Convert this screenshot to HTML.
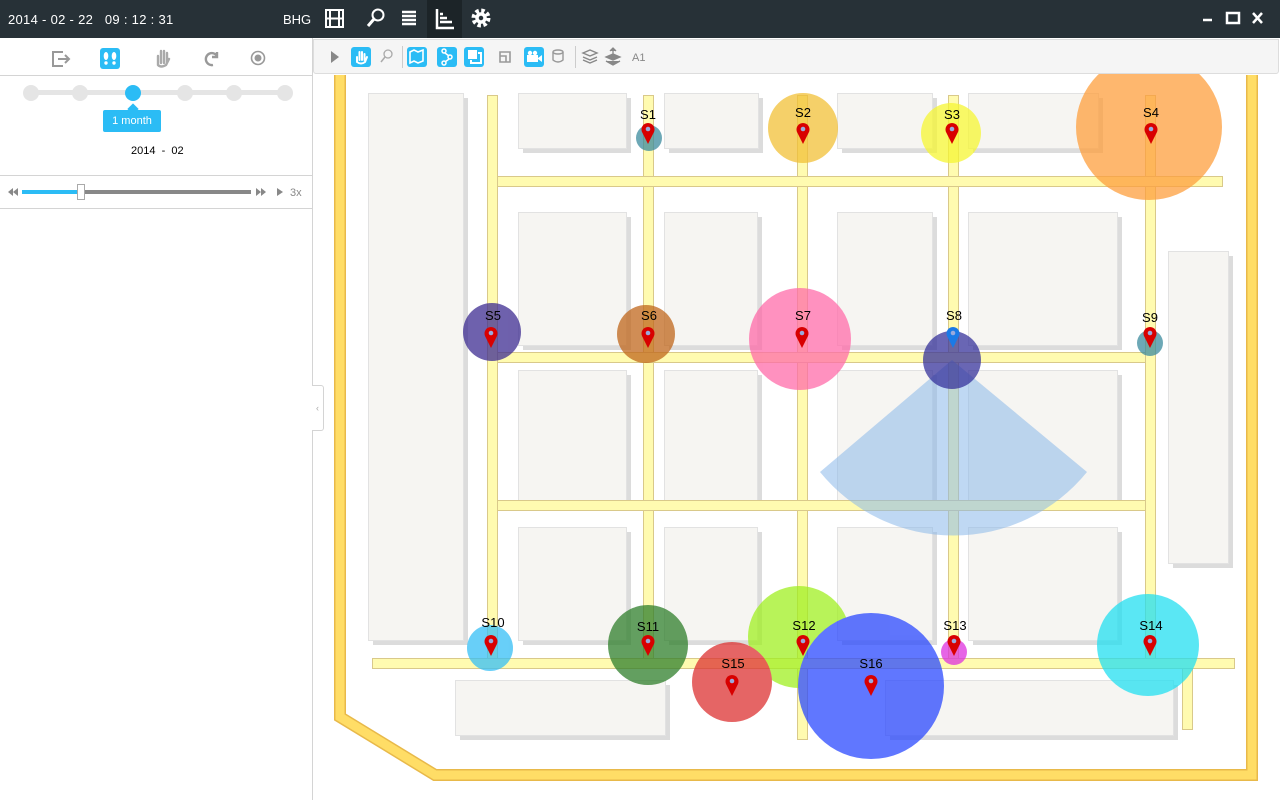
<!DOCTYPE html>
<html><head><meta charset="utf-8"><style>
*{margin:0;padding:0;box-sizing:border-box}
body{width:1280px;height:800px;overflow:hidden;background:#fff;font-family:"Liberation Sans",sans-serif;position:relative}
.top{position:absolute;left:0;top:0;width:1280px;height:38px;background:#273137;color:#fff}
.side{position:absolute;left:0;top:38px;width:313px;height:762px;background:#fff;border-right:1px solid #d4d4d4}
.tb{position:absolute;left:313px;top:39px;width:966px;height:35px;background:#f5f5f5;border:1px solid #ddd;border-radius:0 0 3px 3px}
</style></head><body>
<svg width="1280" height="800" style="position:absolute;left:0;top:0">
<path d="M340 75 V717 L435 775 H1252 V75" fill="none" stroke="#e8b94a" stroke-width="12"/>
<path d="M340 75 V717 L435 775 H1252 V75" fill="none" stroke="#ffdd66" stroke-width="9"/>
<g fill="#dcdcdc">
<rect x="373" y="98" width="95" height="547"/>
<rect x="523" y="98" width="108" height="55"/><rect x="669" y="98" width="94" height="55"/><rect x="842" y="98" width="95" height="55"/><rect x="973" y="98" width="130" height="55"/>
<rect x="523" y="217" width="108" height="133"/><rect x="669" y="217" width="93" height="133"/><rect x="842" y="217" width="95" height="133"/><rect x="973" y="217" width="149" height="133"/>
<rect x="523" y="375" width="108" height="130"/><rect x="669" y="375" width="93" height="130"/><rect x="842" y="375" width="95" height="130"/><rect x="973" y="375" width="149" height="130"/>
<rect x="523" y="532" width="108" height="113"/><rect x="669" y="532" width="93" height="113"/><rect x="842" y="532" width="95" height="113"/><rect x="973" y="532" width="149" height="113"/>
<rect x="1173" y="256" width="60" height="312"/>
<rect x="460" y="685" width="210" height="55"/><rect x="890" y="685" width="288" height="55"/>
</g>
<g fill="#f6f5f2" stroke="#e2e2e2">
<rect x="368.5" y="93.5" width="95" height="547"/>
<rect x="518.5" y="93.5" width="108" height="55"/><rect x="664.5" y="93.5" width="94" height="55"/><rect x="837.5" y="93.5" width="95" height="55"/><rect x="968.5" y="93.5" width="130" height="55"/>
<rect x="518.5" y="212.5" width="108" height="133"/><rect x="664.5" y="212.5" width="93" height="133"/><rect x="837.5" y="212.5" width="95" height="133"/><rect x="968.5" y="212.5" width="149" height="133"/>
<rect x="518.5" y="370.5" width="108" height="130"/><rect x="664.5" y="370.5" width="93" height="130"/><rect x="837.5" y="370.5" width="95" height="130"/><rect x="968.5" y="370.5" width="149" height="130"/>
<rect x="518.5" y="527.5" width="108" height="113"/><rect x="664.5" y="527.5" width="93" height="113"/><rect x="837.5" y="527.5" width="95" height="113"/><rect x="968.5" y="527.5" width="149" height="113"/>
<rect x="1168.5" y="251.5" width="60" height="312"/>
<rect x="455.5" y="680.5" width="210" height="55"/><rect x="885.5" y="680.5" width="288" height="55"/>
</g>
<g fill="#fffbb0" stroke="#d9c98a">
<rect x="487.5" y="95.5" width="10" height="565"/>
<rect x="643.5" y="95.5" width="10" height="565"/>
<rect x="797.5" y="95.5" width="10" height="644"/>
<rect x="948.5" y="95.5" width="10" height="565"/>
<rect x="1145.5" y="95.5" width="10" height="565"/>
<rect x="1182.5" y="668.5" width="10" height="61"/>
<rect x="497.5" y="176.5" width="725" height="10"/>
<rect x="497.5" y="352.5" width="648" height="10"/>
<rect x="497.5" y="500.5" width="648" height="10"/>
<rect x="372.5" y="658.5" width="862" height="10"/>
</g>
<g fill="#fffbb0">
<rect x="488" y="177" width="9" height="9"/><rect x="644" y="177" width="9" height="9"/><rect x="798" y="177" width="9" height="9"/><rect x="949" y="177" width="9" height="9"/><rect x="1146" y="177" width="9" height="9"/>
<rect x="488" y="353" width="9" height="9"/><rect x="644" y="353" width="9" height="9"/><rect x="798" y="353" width="9" height="9"/><rect x="949" y="353" width="9" height="9"/><rect x="1146" y="353" width="9" height="9"/>
<rect x="488" y="501" width="9" height="9"/><rect x="644" y="501" width="9" height="9"/><rect x="798" y="501" width="9" height="9"/><rect x="949" y="501" width="9" height="9"/><rect x="1146" y="501" width="9" height="9"/>
<rect x="488" y="659" width="9" height="9"/><rect x="644" y="659" width="9" height="9"/><rect x="798" y="659" width="9" height="9"/><rect x="949" y="659" width="9" height="9"/><rect x="1146" y="659" width="9" height="9"/>
</g>
<path d="M952 360 L820 472 A172 172 0 0 0 1087 472 Z" fill="#8ab8ea" opacity="0.55"/>
<g opacity="0.74">
<circle cx="649" cy="138" r="13" fill="#3a8a9c"/>
<circle cx="803" cy="128" r="35" fill="#f2c034"/>
<circle cx="951" cy="133" r="30" fill="#f5f530"/>
<circle cx="1149" cy="127" r="73" fill="#fd9e3c"/>
<circle cx="492" cy="332" r="29" fill="#3c2a90"/>
<circle cx="646" cy="334" r="29" fill="#c0661a"/>
<circle cx="800" cy="339" r="51" fill="#ff6aa8"/>
<circle cx="952" cy="360" r="29" fill="#34309a"/>
<circle cx="1150" cy="343" r="13" fill="#3a8a9c"/>
<circle cx="490" cy="648" r="23" fill="#33bef5"/>
<circle cx="648" cy="645" r="40" fill="#2e7e2a"/>
<circle cx="799" cy="637" r="51" fill="#a0f020"/>
<circle cx="954" cy="652" r="13" fill="#de30de"/>
<circle cx="732" cy="682" r="40" fill="#dc3030"/>
<circle cx="871" cy="686" r="73" fill="#2a48ff"/>
<circle cx="1148" cy="645" r="51" fill="#20def0"/>
</g>
<defs><g id="pin"><path d="M0 14 L-6 2 A6.5 6.5 0 1 1 6 2 Z"/><circle cx="0" cy="-1" r="2.3" fill="#9ad"/></g></defs>
<g fill="#d80000">
<use href="#pin" x="648" y="130"/><use href="#pin" x="803" y="130"/><use href="#pin" x="952" y="130"/><use href="#pin" x="1151" y="130"/>
<use href="#pin" x="491" y="334"/><use href="#pin" x="648" y="334"/><use href="#pin" x="802" y="334"/><use href="#pin" x="1150" y="334"/>
<use href="#pin" x="491" y="642"/><use href="#pin" x="648" y="642"/><use href="#pin" x="803" y="642"/><use href="#pin" x="954" y="642"/><use href="#pin" x="1150" y="642"/>
<use href="#pin" x="732" y="682"/><use href="#pin" x="871" y="682"/>
</g>
<use href="#pin" x="953" y="334" fill="#1a7ae6"/>
<g font-family="Liberation Sans, sans-serif" font-size="13" fill="#000" text-anchor="middle">
<text x="648" y="119">S1</text><text x="803" y="117">S2</text><text x="952" y="119">S3</text><text x="1151" y="117">S4</text>
<text x="493" y="320">S5</text><text x="649" y="320">S6</text><text x="803" y="320">S7</text><text x="954" y="320">S8</text><text x="1150" y="322">S9</text>
<text x="493" y="627">S10</text><text x="648" y="631">S11</text><text x="804" y="630">S12</text><text x="955" y="630">S13</text><text x="1151" y="630">S14</text>
<text x="733" y="668">S15</text><text x="871" y="668">S16</text>
</g>
</svg>

<div class="top">
<div style="position:absolute;left:8px;top:12px;font-size:13px;letter-spacing:.3px">2014 - 02 - 22&nbsp;&nbsp; 09 : 12 : 31</div>
<div style="position:absolute;left:283px;top:12px;font-size:13px">BHG</div>
<svg width="1280" height="38" style="position:absolute;left:0;top:0" fill="none" stroke="#fff" stroke-width="2">
<rect x="326" y="10" width="17" height="17"/><line x1="330" y1="10" x2="330" y2="27"/><line x1="339" y1="10" x2="339" y2="27"/><line x1="326" y1="18.5" x2="343" y2="18.5"/>
<circle cx="378" cy="15" r="5.5"/><line x1="374" y1="19" x2="368" y2="26" stroke-width="3"/>
<path d="M402 12h14M402 16h14M402 20h14M402 24h14" stroke-width="2.5"/>
<rect x="427" y="0" width="35" height="38" fill="#1c2428" stroke="none"/>
<path d="M437 9v19h17M440 14h3M440 18h7M440 22h12" stroke-width="2.5"/>
<circle cx="481" cy="18" r="7" stroke-width="5" stroke-dasharray="3.2 2.3"/><circle cx="481" cy="18" r="4" stroke-width="3.5"/>
<line x1="1203" y1="20" x2="1212" y2="20" stroke-width="2.5"/>
<rect x="1227" y="13" width="12" height="10" stroke-width="2.5"/>
<path d="M1253 13l9 10M1262 13l-9 10" stroke-width="2.5"/>
</svg>
</div>

<div class="side">
<svg width="313" height="40" style="position:absolute;left:0;top:0">
<path d="M63 14h-10v14h10M58 21h10M65 17l4 4-4 4" fill="none" stroke="#999" stroke-width="2"/>
<rect x="100" y="10" width="20" height="21" rx="3" fill="#2bbcf5"/>
<g fill="#fff"><ellipse cx="106" cy="18" rx="2.3" ry="4"/><ellipse cx="114" cy="18" rx="2.3" ry="4"/><circle cx="106" cy="25" r="1.7"/><circle cx="114" cy="25" r="1.7"/></g>
<path d="M158 27v-9M161 25v-12M164 25v-12M167 25v-10M158 27q3 3 8 0l3-6" stroke="#aaa" stroke-width="2.4" fill="none" stroke-linecap="round"/>
<path d="M213 27a6 6 0 1 1 4-9M217 14v5h-5" stroke="#999" stroke-width="2.4" fill="none"/>
<circle cx="258" cy="20" r="6.5" fill="none" stroke="#999" stroke-width="1.6"/><circle cx="258" cy="20" r="3.5" fill="#999"/>
</svg>
<div style="position:absolute;left:0;top:37px;width:312px;height:1px;background:#d4d4d4"></div>
<div style="position:absolute;left:30px;top:52px;width:256px;height:5px;background:#e5e5e5"></div>
<div style="position:absolute;left:23px;top:47px;width:16px;height:16px;border-radius:50%;background:#e5e5e5"></div>
<div style="position:absolute;left:72px;top:47px;width:16px;height:16px;border-radius:50%;background:#e5e5e5"></div>
<div style="position:absolute;left:125px;top:47px;width:16px;height:16px;border-radius:50%;background:#2bbcf5"></div>
<div style="position:absolute;left:177px;top:47px;width:16px;height:16px;border-radius:50%;background:#e5e5e5"></div>
<div style="position:absolute;left:226px;top:47px;width:16px;height:16px;border-radius:50%;background:#e5e5e5"></div>
<div style="position:absolute;left:277px;top:47px;width:16px;height:16px;border-radius:50%;background:#e5e5e5"></div>
<div style="position:absolute;left:129px;top:67px;width:8px;height:8px;background:#2bbcf5;transform:rotate(45deg)"></div>
<div style="position:absolute;left:103px;top:72px;width:58px;height:22px;background:#2bbcf5;border-radius:2px;color:#fff;font-size:11px;text-align:center;line-height:22px">1 month</div>
<div style="position:absolute;left:131px;top:107px;font-size:11px;color:#000">2014 &nbsp;-&nbsp; 02</div>
<div style="position:absolute;left:0;top:137px;width:312px;height:1px;background:#d4d4d4"></div>
<svg width="313" height="30" style="position:absolute;left:0;top:140px" fill="#888">
<path d="M8 14l5-4v8zM13 14l5-4v8z"/>
<rect x="22" y="12" width="58" height="4" fill="#2bbcf5"/><rect x="80" y="12" width="171" height="4"/>
<rect x="77.5" y="6.5" width="7" height="15" fill="#fff" stroke="#aaa"/>
<path d="M256 10l5 4-5 4zM261 10l5 4-5 4zM277 10l6 4-6 4z"/>
<text x="290" y="18" font-size="11" font-family="Liberation Sans" fill="#888">3x</text>
</svg>
<div style="position:absolute;left:0;top:170px;width:312px;height:1px;background:#d4d4d4"></div>
</div>
<div style="position:absolute;left:312px;top:385px;width:12px;height:46px;background:#fff;border:1px solid #d4d4d4;border-left:none;border-radius:0 3px 3px 0;color:#aaa;font-size:9px;line-height:44px;text-align:center">‹</div>

<div class="tb">
<svg width="966" height="35" style="position:absolute;left:-1px;top:-1px">
<path d="M18 12l8 6-8 6z" fill="#888"/>
<rect x="38" y="8" width="20" height="20" rx="3" fill="#2bbcf5"/>
<path d="M44 23v-5M46.5 21v-8M49 21v-8M51.5 21v-6M44 23q4 3 8 0l2-5" stroke="#fff" stroke-width="2" fill="none" stroke-linecap="round"/>
<circle cx="75" cy="15" r="4" fill="none" stroke="#aaa" stroke-width="1.3"/><line x1="72" y1="18" x2="68" y2="23" stroke="#aaa" stroke-width="1.5"/>
<line x1="89.5" y1="7" x2="89.5" y2="29" stroke="#ccc"/>
<rect x="94" y="8" width="20" height="20" rx="3" fill="#2bbcf5"/>
<path d="M97 13l4-2 4 2 5-2v11l-5 2-4-2-4 2z" fill="none" stroke="#fff" stroke-width="1.6"/>
<rect x="124" y="8" width="20" height="20" rx="3" fill="#2bbcf5"/>
<g fill="none" stroke="#fff" stroke-width="1.5"><circle cx="131" cy="12" r="2"/><circle cx="137" cy="18" r="2"/><circle cx="131" cy="24" r="2"/><path d="M132 14l4 3M136 20l-4 3"/></g>
<rect x="151" y="8" width="20" height="20" rx="3" fill="#2bbcf5"/>
<rect x="155" y="11" width="9" height="9" fill="#fff"/><path d="M165 14h3v10h-10v-3" fill="none" stroke="#fff" stroke-width="2"/>
<path d="M187 13h10v10h-10zM187 17h6v6" fill="none" stroke="#999" stroke-width="1.6"/>
<rect x="211" y="8" width="20" height="20" rx="3" fill="#2bbcf5"/>
<rect x="214" y="16" width="11" height="7" fill="#fff"/><circle cx="217" cy="14" r="2.2" fill="#fff"/><circle cx="222" cy="14" r="2.2" fill="#fff"/><path d="M225 19l4-3v7l-4-3z" fill="#fff"/>
<path d="M240 13v8q5 4 10 0v-8" fill="none" stroke="#999" stroke-width="1.4"/><ellipse cx="245" cy="13" rx="5" ry="2" fill="none" stroke="#999" stroke-width="1.4"/>
<line x1="262.5" y1="7" x2="262.5" y2="29" stroke="#ccc"/>
<path d="M270 14l7-3 7 3-7 3zM270 18l7 3 7-3M270 21l7 3 7-3" fill="none" stroke="#888" stroke-width="1.4"/>
<path d="M293 18l7-3 7 3-7 3zM300 9v8M297 12l3-3 3 3M293 22l7 4 7-4" fill="#888" stroke="#888" stroke-width="1.3"/>
<text x="319" y="22" font-size="11" font-family="Liberation Sans" fill="#888">A1</text>
</svg>
</div>
</body></html>
